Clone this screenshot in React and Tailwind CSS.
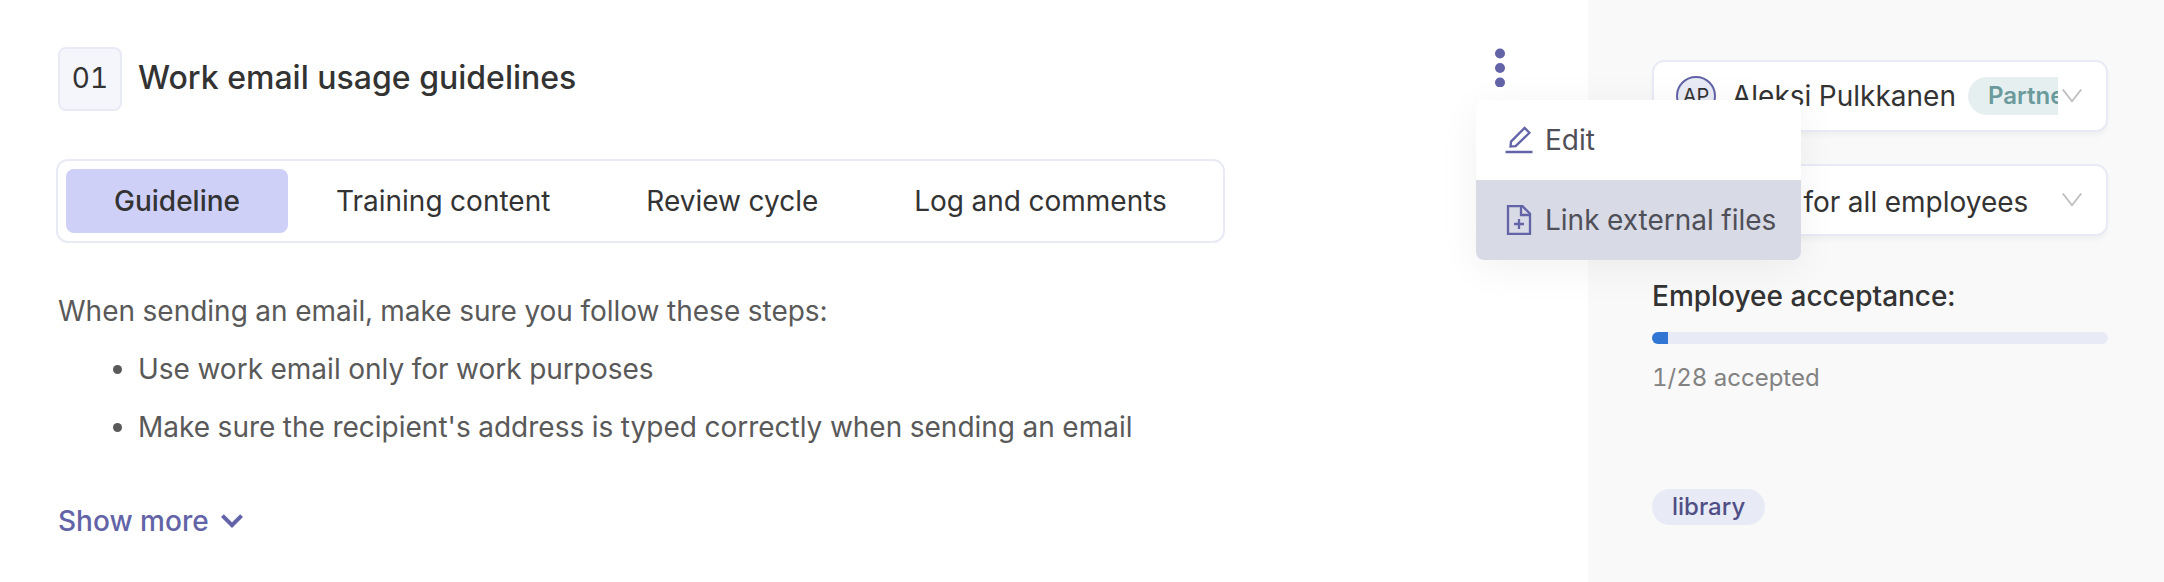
import React, { useState } from "react";

const tabs = ["Guideline", "Training content", "Review cycle", "Log and comments"];

const steps = [
  "Use work email only for work purposes",
  "Make sure the recipient's address is typed correctly when sending an email",
];

// --- Icons ---
function DotsIcon() {
  return (
    <svg width="10" height="40" viewBox="0 0 10 40" fill="#6264a7" aria-hidden="true">
      <circle cx="5" cy="6.5" r="5" />
      <circle cx="5" cy="21" r="5" />
      <circle cx="5" cy="35.5" r="5" />
    </svg>
  );
}

function EditIcon() {
  return (
    <svg width="28" height="28" viewBox="0 0 28 28" fill="none" stroke="#6264a7" strokeWidth="2.3" aria-hidden="true">
      <path d="M5.5 20.6L6 15.6L19.6 2L24.4 6.8L10.6 20.2Z" />
      <path d="M0.5 26H27.5" strokeWidth="2.6" />
    </svg>
  );
}

function FilePlusIcon() {
  return (
    <svg width="28" height="30" viewBox="0 0 28 30" fill="none" stroke="#6264a7" strokeWidth="2.3" aria-hidden="true">
      <path d="M3 1.2H17.5L25 8.8V28.8H3Z" />
      <path d="M16 1V10H25" />
      <path d="M14 14V24M9 19H19" />
    </svg>
  );
}

function ArrowDown() {
  return (
    <svg width="20" height="14" viewBox="0 0 20 14" fill="none" stroke="#bfbfbf" strokeWidth="1.8" aria-hidden="true">
      <path d="M0.8 0.5L10 12.4L19.2 0.5" />
    </svg>
  );
}

function ChevronDown() {
  return (
    <svg width="22" height="14" viewBox="0 0 22 14" fill="none" stroke="#6264a7" strokeWidth="4" aria-hidden="true">
      <path d="M1.4 1.6L11 11.2L20.6 1.6" />
    </svg>
  );
}

// --- Actions menu ---
function ActionsMenu() {
  const [open, setOpen] = useState(true);

  return (
    <div className="relative">
      <button
        type="button"
        aria-label="Actions"
        aria-expanded={open}
        onClick={() => setOpen(!open)}
        className="flex w-12 justify-center"
      >
        <DotsIcon />
      </button>
      {open && (
        <div
          role="menu"
          className="absolute top-[53px] left-0 z-10 w-[325px] overflow-hidden rounded-lg bg-white text-[28px] text-[#4f4f57] shadow-[0_8px_40px_rgba(0,0,0,0.06)]"
        >
          <button type="button" role="menuitem" className="flex h-20 w-full items-center gap-3 pl-[29px]">
            <EditIcon />
            Edit
          </button>
          <button
            type="button"
            role="menuitem"
            className="flex h-20 w-full items-center gap-3 bg-[#d8dae6] pl-[29px] whitespace-nowrap"
          >
            <FilePlusIcon />
            Link external files
          </button>
        </div>
      )}
    </div>
  );
}

function GuidelinePanel() {
  const [activeTab, setActiveTab] = useState("Guideline");

  return (
    <main className="min-w-0 flex-1 pt-[47px] pr-16 pb-10 pl-[58px]">
      <header className="flex items-start justify-between">
        <div className="flex items-center gap-4">
          <span className="flex size-16 items-center justify-center rounded-lg border-2 border-[#e8eaf6] bg-[#f5f6fc] pb-0.5 text-[28px]">
            01
          </span>
          <h1 className="pb-0.5 text-[32px] font-medium">Work email usage guidelines</h1>
        </div>
        <ActionsMenu />
      </header>

      <div role="tablist" className="mt-12 -ml-0.5 inline-flex rounded-xl border-2 border-[#e8eaf6] p-2">
        {tabs.map((tab) => (
          <button
            key={tab}
            type="button"
            role="tab"
            aria-selected={tab === activeTab}
            onClick={() => setActiveTab(tab)}
            className={`h-16 rounded-lg px-12 text-[28px] whitespace-nowrap ${
              tab === activeTab ? "bg-[#cfd0f8] font-medium" : ""
            }`}
          >
            {tab}
          </button>
        ))}
      </div>

      <div className="mt-[39px] text-[28px] leading-[58px] text-[#595959]">
        <p>When sending an email, make sure you follow these steps:</p>
        <ul className="list-disc pl-20">
          {steps.map((step) => (
            <li key={step}>{step}</li>
          ))}
        </ul>
      </div>

      <button type="button" className="mt-[45px] flex items-center gap-3 text-[28px] leading-10 font-medium text-[#6264a7]">
        Show more
        <ChevronDown />
      </button>
    </main>
  );
}

function Sidebar() {
  return (
    <aside className="w-[576px] shrink-0 bg-[#f9f9f9] pt-[60px] pr-14 pb-14 pl-16">
      <button
        type="button"
        aria-haspopup="listbox"
        className="flex h-[72px] w-full items-center gap-1 rounded-xl border-2 border-[#e8eaf6] bg-white pr-6 pl-[22px] text-[28px] shadow-[0_4px_4px_rgba(0,0,0,0.03)]"
      >
        <span className="flex min-w-0 flex-1 items-center overflow-hidden whitespace-nowrap">
          <span className="flex size-10 shrink-0 items-center justify-center rounded-full border-2 border-[#6264a7] bg-[#e8eaf6] text-xl">
            AP
          </span>
          <span className="ml-4">Aleksi Pulkkanen</span>
          <span className="ml-3 rounded-full bg-[#e6eff0] px-5 text-2xl leading-[38px] font-semibold text-[#6a9a9c]">
            Partner
          </span>
        </span>
        <ArrowDown />
      </button>

      <div className="relative mt-8">
        <select
          aria-label="Acceptance requirement"
          className="h-[72px] w-full appearance-none rounded-xl border-2 border-[#e8eaf6] bg-white pt-1 pr-14 pl-6 text-[28px] shadow-[0_4px_4px_rgba(0,0,0,0.03)]"
        >
          <option>Required for all employees</option>
        </select>
        <span className="pointer-events-none absolute inset-y-0 right-[26px] flex items-center">
          <ArrowDown />
        </span>
      </div>

      <h2 className="mt-10 text-[28px] leading-10 font-medium">Employee acceptance:</h2>
      <div
        role="progressbar"
        aria-label="Employee acceptance"
        aria-valuemin={0}
        aria-valuemax={28}
        aria-valuenow={1}
        className="mt-4 h-3 overflow-hidden rounded-md bg-[#e8eaf6]"
      >
        <div className="h-full bg-[#3176d2]" style={{ width: `${(1 / 28) * 100}%` }} />
      </div>
      <p className="mt-4 text-2xl leading-9 text-[#828282]">1/28 accepted</p>

      <span className="mt-[93px] inline-block rounded-full bg-[#e8eaf6] px-5 text-2xl leading-9 font-medium text-[#4f4f85]">
        library
      </span>
    </aside>
  );
}

export default function App() {
  return (
    <div className="flex min-h-screen bg-white font-['Inter',sans-serif] text-[#333333] tabular-nums">
      <GuidelinePanel />
      <Sidebar />
    </div>
  );
}
